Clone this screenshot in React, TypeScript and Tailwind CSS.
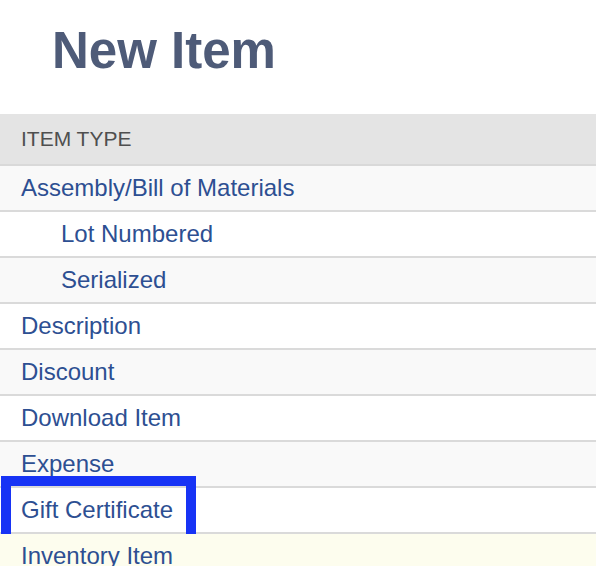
import React from "react";

type Row = { label: string; indent?: boolean; bg: string; highlight?: boolean };

const rows: Row[] = [
  { label: "Assembly/Bill of Materials", bg: "bg-[#f9f9f9]" },
  { label: "Lot Numbered", indent: true, bg: "bg-white" },
  { label: "Serialized", indent: true, bg: "bg-[#f9f9f9]" },
  { label: "Description", bg: "bg-white" },
  { label: "Discount", bg: "bg-[#f9f9f9]" },
  { label: "Download Item", bg: "bg-white" },
  { label: "Expense", bg: "bg-[#f9f9f9]" },
  { label: "Gift Certificate", bg: "bg-white", highlight: true },
  { label: "Inventory Item", bg: "bg-[#fdfdee]" },
];

export default function App() {
  return (
    <div
      className="w-[596px] h-[566px] overflow-hidden bg-white"
      style={{ fontFamily: '"Liberation Sans", Arial, sans-serif' }}
    >
      <h1 className="pl-[52px] pt-[21px] mb-[33px] h-[81px] text-[51px] leading-[60px] font-bold text-[#4e5b78]">
        New Item
      </h1>

      <div className="h-[52px] bg-[#e4e4e4] border-b-2 border-[#d9d9d9] pl-[21px] text-[21px] leading-[50px] text-[#4f4f4f]">
        ITEM TYPE
      </div>

      {rows.map((row) => (
        <div
          key={row.label}
          className={`relative h-[46px] border-b-2 border-[#dadada] ${row.bg}`}
        >
          <a
            href="#"
            className={`block text-[24px] leading-[44px] text-[#2d4f92] ${
              row.indent ? "pl-[61px]" : "pl-[21px]"
            }`}
          >
            {row.label}
          </a>
          {row.highlight && (
            <div className="absolute left-[1px] top-[-12px] w-[195px] h-[73px] border-[10px] border-[#1733f5]" />
          )}
        </div>
      ))}
    </div>
  );
}
